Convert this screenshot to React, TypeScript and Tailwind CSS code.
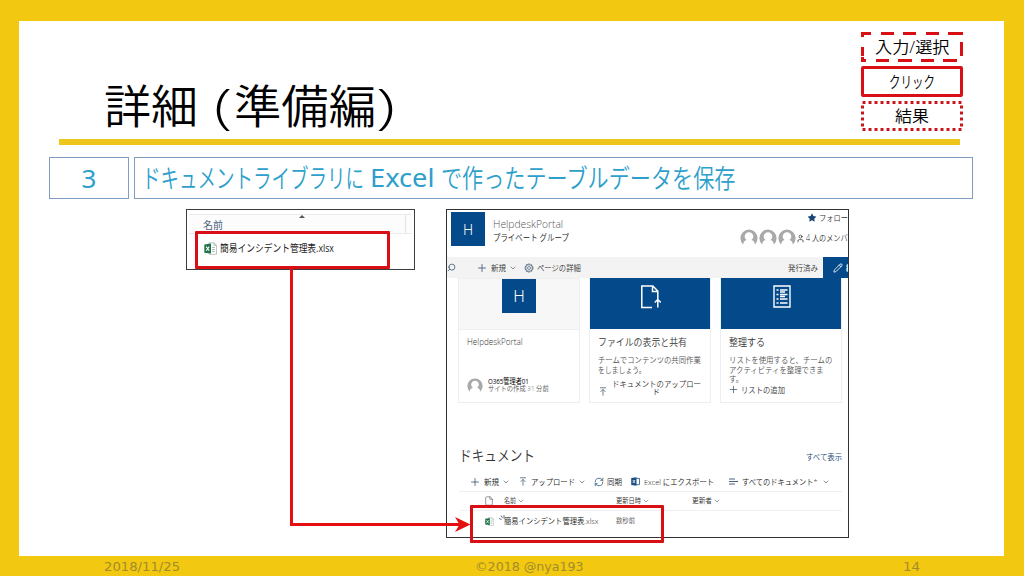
import { useLayoutEffect, useRef } from "react";
import type { ReactNode } from "react";
import {
  ChevronDown,
  File,
  Pencil,
  Plus,
  RefreshCw,
  Search,
  User,
} from "lucide-react";
import { AiFillStar } from "react-icons/ai";

type FitProps = { className: string; children: ReactNode };

// squeezes one line of text to the width of its box
const Fit = ({ className, children }: FitProps) => {
  const box = useRef<HTMLDivElement>(null);
  const text = useRef<HTMLSpanElement>(null);

  useLayoutEffect(() => {
    if (!box.current || !text.current) return;
    const ratio = box.current.clientWidth / text.current.offsetWidth;
    text.current.style.transform = `scaleX(${ratio})`;
  }, []);

  return (
    <div ref={box} className={`shrink-0 whitespace-nowrap ${className}`}>
      <span ref={text} className="inline-block origin-left">
        {children}
      </span>
    </div>
  );
};

const Avatar = ({ className }: { className: string }) => (
  <svg viewBox="0 0 18 18" className={`shrink-0 ${className}`}>
    <path
      d="M3.2 16.5A8.6 8.6 0 1 1 14.8 16.5C14.6 13.8 13.4 12.6 11.4 12.1A4.3 4.3 0 1 0 6.6 12.1C4.6 12.6 3.4 13.8 3.2 16.5Z"
      fill="#a9a9a9"
    />
  </svg>
);

const Gear = () => (
  <svg viewBox="0 0 10 10" className="ml-[7px] h-[10px] w-[10px] shrink-0" fill="none" stroke="#5b7186">
    <circle cx="5" cy="5" r="3.9" strokeWidth="1.1" strokeDasharray="1.8 .65" />
    <circle cx="5" cy="5" r="3.2" strokeWidth=".6" />
    <circle cx="5" cy="5" r="1.5" strokeWidth=".8" />
  </svg>
);

const ExcelFile = ({ className }: { className: string }) => (
  <svg viewBox="0 0 13 13" className={`shrink-0 ${className}`}>
    <path d="M5 .8h5l2.5 2.5v9H5z" fill="#fff" stroke="#a5aaa7" strokeWidth=".7" />
    <path d="M10 .8v2.5h2.5M8 5.5h3M8 7.5h3M8 9.5h3" fill="none" stroke="#8cab98" strokeWidth=".7" />
    <path d="M.3 2.6 7 1.6v10L.3 10.8z" fill="#21734a" />
    <path d="m2.2 4.6 3 4.2m0-4.2-3 4.2" stroke="#fff" strokeWidth="1.1" />
  </svg>
);

const ExcelBadge = () => (
  <svg viewBox="0 0 9 9" className="h-[9px] w-[9px] shrink-0">
    <path d="M5 1.4h3.5v6.2H5" fill="#fff" stroke="#1d5080" strokeWidth=".8" />
    <path d="M.2 1 5.5.2v8.6L.2 8z" fill="#1d4f85" />
    <path d="m1.8 3 2.2 3M4 3 1.8 6" stroke="#fff" strokeWidth=".8" />
  </svg>
);

const UploadArrow = ({ className }: { className: string }) => (
  <svg viewBox="0 0 8 9" className={`shrink-0 ${className}`}>
    <path d="M1 .8h6M4 8.6V2.4M1.6 4.8 4 2.4l2.4 2.4" fill="none" stroke="#4a6076" strokeWidth=".8" />
  </svg>
);

const Legend = () => (
  <div className="mr-[41px] mt-[11px] flex w-[102px] flex-col gap-[4px] text-[16px] text-black">
    <div className="relative flex h-[30px] items-center justify-center">
      <svg viewBox="0 0 102 30" className="absolute inset-0 h-full w-full" fill="none" stroke="#d80f14" strokeWidth="3">
        <path d="M1.5 5V1.5H10M20 1.5h13M42 1.5h13M65 1.5h13M87 1.5h13.5V3M100.5 10v14M96 28.5H82M73 28.5H60M51 28.5H37M28 28.5H15M5 28.5H1.5V25M1.5 15v9" />
      </svg>
      <Fit className="w-[74px] leading-[28px]">入力/選択</Fit>
    </div>
    <div className="flex h-[31px] items-center justify-center rounded-[2px] border-3 border-[#d80f14]">
      <Fit className="w-[46px] leading-[24px]">クリック</Fit>
    </div>
    <div className="relative flex h-[30px] items-center justify-center">
      <svg viewBox="0 0 102 30" className="absolute inset-0 h-full w-full">
        <rect x="1.5" y="1.5" width="99" height="27" fill="none" stroke="#c8181f" strokeWidth="3" strokeDasharray="3 3" />
      </svg>
      <Fit className="w-[34px] leading-[28px]">結果</Fit>
    </div>
  </div>
);

const ExplorerShot = () => (
  <div className="relative ml-[167px] h-[61px] w-[229px] shrink-0 border-[1.5px] border-[#3c3c3c] bg-white">
    <div className="mx-[2px] mt-[4px] flex h-[20px] border-y border-[#e9ebee] bg-[#fcfcfd]">
      <Fit className="ml-[14px] w-[20px] text-[10px] leading-[20px] text-[#4c607a]">名前</Fit>
      <svg viewBox="0 0 6 3" className="ml-[76px] h-[3px] w-[6px]">
        <path d="M0 3 3 0l3 3z" fill="#555" />
      </svg>
      <div className="ml-auto mr-[6px] w-px bg-[#e3e5e8]" />
    </div>
    <div className="flex h-[28px] items-center pl-[17px]">
      <ExcelFile className="h-[13px] w-[13px]" />
      <Fit className="ml-[3px] w-[114px] text-[10.5px] leading-[16px] text-[#1c1c1c]">簡易インシデント管理表.xlsx</Fit>
    </div>
    <div className="absolute left-[8px] top-[21px] h-[38px] w-[195px] rounded-[1px] border-3 border-[#d80f14]" />
  </div>
);

const PortalShot = () => (
  <div className="relative ml-[31px] h-[329px] w-[403px] shrink-0 border-[1.5px] border-[#333] bg-white">
    <div className="h-full overflow-hidden font-[350]">
      <div className="flex h-[47px]">
        <div className="ml-[4px] mt-[2px] flex h-[34px] w-[34px] items-center justify-center bg-[#04498a] font-['Noto_Sans'] text-[14px] text-white">H</div>
        <div className="ml-[8px] pt-[7px] text-[#555]">
          <Fit className="w-[70px] text-[11px] font-light leading-[14px]">HelpdeskPortal</Fit>
          <Fit className="w-[76px] text-[9px] leading-[13px] text-[#222]">プライベート グループ</Fit>
        </div>
        <div className="ml-auto w-[108px] shrink-0 text-[8.5px] text-[#333]">
          <div className="ml-[67px] mt-[2px] flex h-[12px] items-center">
            <AiFillStar size={10} color="#1b4478" className="shrink-0" />
            <Fit className="ml-[2px] w-[29px]">フォロー</Fit>
          </div>
          <div className="mt-[4px] flex h-[18px] items-center">
            <div className="flex gap-[1px]">
              <Avatar className="h-[18px] w-[18px]" />
              <Avatar className="h-[18px] w-[18px]" />
              <Avatar className="h-[18px] w-[18px]" />
            </div>
            <User size={9} strokeWidth={2} className="mt-[2px] shrink-0" />
            <Fit className="ml-[1px] mt-[2px] w-[42px]">4 人のメンバ</Fit>
          </div>
        </div>
      </div>

      <div className="flex h-[21px] items-center bg-[#f3f3f3] text-[8px] text-[#333]">
        <Search size={9} strokeWidth={2} color="#35506e" className="-scale-x-100" />
        <Plus size={12} strokeWidth={1.6} color="#35506e" className="ml-[20px]" />
        <Fit className="ml-[3px] w-[15px]">新規</Fit>
        <ChevronDown size={8} strokeWidth={1.6} className="ml-[3px]" />
        <Gear />
        <Fit className="ml-[3px] w-[44px]">ページの詳細</Fit>
        <Fit className="ml-auto w-[30px]">発行済み</Fit>
        <div className="ml-[5px] flex h-full w-[25px] shrink-0 items-center overflow-hidden bg-[#04498a] pl-[10px] text-white">
          <Pencil size={10} strokeWidth={2} className="shrink-0" />
          <Fit className="ml-[3px] w-[14px] font-bold">編集</Fit>
        </div>
      </div>

      <div className="ml-[11px] flex h-[125px] gap-[9px] text-[#333]">
        <div className="w-[122px] border border-[#eee]">
          <div className="flex h-[51px] justify-center border-b border-[#eee] bg-[#f7f7f7]">
            <div className="flex h-[34px] w-[34px] items-center justify-center bg-[#04498a] font-['Noto_Sans'] text-[16px] font-light text-white">H</div>
          </div>
          <Fit className="ml-[8px] mt-[5px] w-[56px] text-[9px] font-light leading-[14px]">HelpdeskPortal</Fit>
          <div className="ml-[8px] mt-[28px] flex items-center">
            <Avatar className="h-[16px] w-[16px]" />
            <div className="ml-[5px]">
              <Fit className="w-[41px] text-[7.5px] font-normal leading-[8px] text-black">O365管理者01</Fit>
              <Fit className="w-[61px] text-[7px] leading-[8px] text-[#555]">サイトの作成 31 分前</Fit>
            </div>
          </div>
        </div>

        <div className="w-[122px] border border-t-0 border-[#eee]">
          <div className="flex h-[51px] justify-center bg-[#04498a] pl-[2px] pt-[6px]">
            <svg viewBox="0 0 22 26" className="h-[26px] w-[22px]" fill="none" stroke="#fff" strokeWidth="1.5">
              <path d="M12 23.5H1.8V2h11l5 5v8M12.5 2v5.5H18M17.8 23.5v-8M14.8 18.5l3-3 3 3" />
            </svg>
          </div>
          <Fit className="ml-[8px] mt-[6px] w-[89px] text-[10px] leading-[14px]">ファイルの表示と共有</Fit>
          <Fit className="ml-[8px] mt-[6px] w-[103px] text-[8px] leading-[9.5px] text-[#555]">チームでコンテンツの共同作業</Fit>
          <Fit className="ml-[8px] w-[48px] text-[8px] leading-[9.5px] text-[#555]">をしましょう。</Fit>
          <div className="ml-[9px] mt-[5px] flex items-center">
            <UploadArrow className="mt-[7px] h-[9px] w-[8px]" />
            <div className="ml-[5px] flex flex-col items-center text-[8px]">
              <Fit className="h-[9px] w-[89px] leading-[9px]">ドキュメントのアップロー</Fit>
              <Fit className="h-[8px] w-[8px] text-[7.5px] leading-[8px]">ド</Fit>
            </div>
          </div>
        </div>

        <div className="w-[122px] border border-t-0 border-[#eee]">
          <div className="flex h-[51px] justify-center bg-[#04498a] pl-[2px] pt-[7px]">
            <svg viewBox="0 0 18 23" className="h-[23px] w-[18px]" fill="none" stroke="#fff" strokeWidth="1.4">
              <path d="M1 1h16v21H1zM3.5 5h2M3.5 9.5h2M3.5 14h2M3.5 18h2M7 5h7.5M7 7h5M7 9.5h7.5M7 11.5h5M7 14h7.5M7 18h7.5" />
            </svg>
          </div>
          <Fit className="ml-[8px] mt-[6px] w-[36px] text-[10px] leading-[14px]">整理する</Fit>
          <Fit className="ml-[8px] mt-[6px] w-[103px] text-[8px] leading-[9.5px] text-[#555]">リストを使用すると、チームの</Fit>
          <Fit className="ml-[8px] w-[95px] text-[8px] leading-[9.5px] text-[#555]">アクティビティを整理できま</Fit>
          <Fit className="ml-[8px] w-[14px] text-[8px] leading-[9.5px] text-[#555]">す。</Fit>
          <div className="ml-[7px] flex items-center">
            <Plus size={11} strokeWidth={1.6} color="#35506e" />
            <Fit className="ml-[2px] w-[44px] text-[8.5px] leading-[9px]">リストの追加</Fit>
          </div>
        </div>
      </div>

      <div className="mt-[42px] flex h-[20px] items-center pl-[12px] text-[#333]">
        <Fit className="w-[76px] text-[15px] leading-[20px]">ドキュメント</Fit>
        <Fit className="ml-auto mr-[6px] mt-[4px] w-[36px] text-[8px] font-normal text-[#1f4f7b]">すべて表示</Fit>
      </div>

      <div className="ml-[12px] mt-[7px] flex h-[20px] w-[383px] items-center border-b border-[#eee] text-[8px] text-[#222]">
        <Plus size={12} strokeWidth={1.6} color="#35506e" className="ml-[10px]" />
        <Fit className="ml-[3px] w-[15px]">新規</Fit>
        <ChevronDown size={8} strokeWidth={1.5} className="ml-[3px]" />
        <UploadArrow className="ml-[9px] h-[9px] w-[8px]" />
        <Fit className="ml-[4px] w-[44px]">アップロード</Fit>
        <ChevronDown size={8} strokeWidth={1.5} className="ml-[3px]" />
        <RefreshCw size={10} strokeWidth={1.8} color="#1f4f7b" className="ml-[8px]" />
        <Fit className="ml-[3px] w-[15px]">同期</Fit>
        <div className="ml-[9px]">
          <ExcelBadge />
        </div>
        <Fit className="ml-[4px] w-[70px]">Excel にエクスポート</Fit>
        <svg viewBox="0 0 9 7" className="ml-[15px] h-[7px] w-[9px]" stroke="#35506e" strokeWidth=".9">
          <path d="M0 1h6M0 3.5h9M0 6h6" />
        </svg>
        <Fit className="ml-[4px] w-[76px]">すべてのドキュメント*</Fit>
        <ChevronDown size={8} strokeWidth={1.5} className="ml-[4px]" />
      </div>

      <div className="ml-[12px] flex h-[19px] w-[383px] items-center border-b border-[#f1f1f1] text-[7px] text-[#333]">
        <File size={10} strokeWidth={1.4} color="#555" className="ml-[25px]" />
        <Fit className="ml-[10px] w-[12px]">名前</Fit>
        <ChevronDown size={8} strokeWidth={1.4} className="ml-[1px]" />
        <Fit className="ml-[91px] w-[25px]">更新日時</Fit>
        <ChevronDown size={8} strokeWidth={1.4} className="ml-[1px]" />
        <Fit className="ml-[42px] w-[20px]">更新者</Fit>
        <ChevronDown size={8} strokeWidth={1.4} className="ml-[1px]" />
      </div>

      <div className="ml-[12px] flex h-[20px] items-center text-[8px] text-[#222]">
        <ExcelFile className="ml-[26px] h-[9px] w-[9px]" />
        <svg viewBox="0 0 6 7" className="mb-[5px] ml-[5px] h-[7px] w-[6px]" stroke="#35506e" strokeWidth=".8">
          <path d="M0 3.5 2.5 4.5M2 .5l1.6 2.6M5 0v3.5" />
        </svg>
        <Fit className="-ml-[1px] w-[94px]">簡易インシデント管理表.xlsx</Fit>
        <Fit className="ml-[18px] w-[19px] text-[7px] text-[#555]">数秒前</Fit>
      </div>
    </div>
    <div className="absolute left-[23px] top-[295px] h-[38px] w-[194px] rounded-[1px] border-3 border-[#d80f14]" />
  </div>
);

export default function App() {
  return (
    <div className="relative flex h-[576px] w-[1024px] flex-col overflow-hidden bg-[#f2c811] pl-[19px] pr-[20px] pt-[21px] font-['DejaVu_Sans','Noto_Sans_CJK_JP',sans-serif]">
      <main className="h-[535px] bg-white">
        <header className="flex h-[118px] justify-between">
          <h1 className="ml-[85px] mt-[54px] flex font-['Open_Sans','Noto_Sans_CJK_JP',sans-serif] text-[46px] font-[350] leading-[60px] text-black">
            <Fit className="w-[94px]">詳細</Fit>
            <Fit className="ml-[16px] w-[18px] text-[48px]">(</Fit>
            <Fit className="ml-[2px] w-[142px]">準備編</Fit>
            <Fit className="w-[19px] text-[48px]">)</Fit>
          </h1>
          <div className="font-['Open_Sans','Noto_Sans_CJK_JP',sans-serif] font-[350]">
            <Legend />
          </div>
        </header>
        <div className="ml-[40px] h-[6px] w-[901px] bg-[#eec71e]" />

        <div className="mt-[12px] flex h-[42px] gap-[5px] pl-[30px] text-[26px] leading-[42px] text-[#2e9fcb]">
          <div className="w-[80px] border border-[#7f9dc0] text-center font-['Noto_Sans'] leading-[40px]">3</div>
          <div className="w-[839px] border border-[#7f9dc0] pl-[7px]">
            <div className="flex font-[350]">
              <Fit className="w-[222px]">ドキュメントライブラリに</Fit>
              <Fit className="ml-[6px] w-[65px] font-['Noto_Sans'] font-normal leading-[38px]">Excel</Fit>
              <Fit className="ml-[6px] w-[294px]">で作ったテーブルデータを保存</Fit>
            </div>
          </div>
        </div>

        <div className="mt-[10px] flex items-start font-['Open_Sans','Noto_Sans_CJK_JP',sans-serif]">
          <ExplorerShot />
          <PortalShot />
        </div>
      </main>

      <footer className="flex h-[20px] text-[12.5px] leading-[21px] text-[#a38c2c]">
        <Fit className="ml-[85px] w-[76px]">2018/11/25</Fit>
        <Fit className="ml-[295px] w-[109px]">©2018 @nya193</Fit>
        <Fit className="ml-[319px] w-[17px]">14</Fit>
      </footer>

      <svg viewBox="0 0 190 270" className="absolute left-[285px] top-[265px] h-[270px] w-[190px]">
        <path d="M6.500 3V259.500H176" fill="none" stroke="#e60f0f" strokeWidth="3" />
        <path d="m170 252 15.500 7.500-15.500 7.500 4.500-7.500z" fill="#e60f0f" />
      </svg>
    </div>
  );
}
